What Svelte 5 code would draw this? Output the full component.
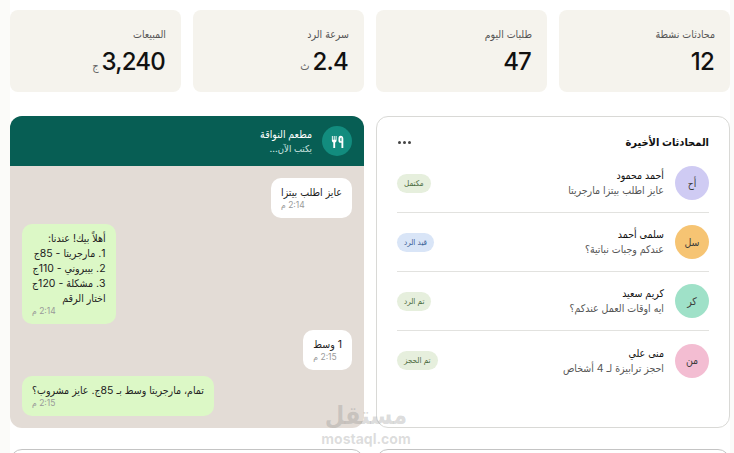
<script>
  const stats = [
    { label: 'محادثات نشطة', value: '12' },
    { label: 'طلبات اليوم', value: '47' },
    { label: 'سرعة الرد', value: '2.4', unit: 'ث' },
    { label: 'المبيعات', value: '3,240', unit: 'ج' }
  ];

  const chats = [
    { initials: 'أح', name: 'أحمد محمود', msg: 'عايز اطلب بيتزا مارجريتا', tag: 'مكتمل', color: '#cfcbf3', kind: 'green' },
    { initials: 'سل', name: 'سلمى أحمد', msg: 'عندكم وجبات نباتية؟', tag: 'قيد الرد', color: '#f6c473', kind: 'blue' },
    { initials: 'كر', name: 'كريم سعيد', msg: 'ايه اوقات العمل عندكم؟', tag: 'تم الرد', color: '#9fe1c8', kind: 'green' },
    { initials: 'من', name: 'منى علي', msg: 'احجز ترابيزة لـ 4 أشخاص', tag: 'تم الحجز', color: '#f3bdd2', kind: 'green' }
  ];

  const messages = [
    { from: 'in', lines: ['عايز اطلب بيتزا'], time: '2:14 م' },
    { from: 'out', lines: ['أهلاً بيك! عندنا:', '1. مارجريتا - 85ج', '2. بيبروني - 110ج', '3. مشكلة - 120ج', 'اختار الرقم'], time: '2:14 م' },
    { from: 'in', lines: ['1 وسط'], time: '2:15 م' },
    { from: 'out', lines: ['تمام، مارجريتا وسط بـ 85ج. عايز مشروب؟'], time: '2:15 م' }
  ];
</script>

<div class="page" dir="rtl">
  <div class="content">
    <section class="stats">
      {#each stats as s}
        <div class="stat">
          <div class="stat-label">{s.label}</div>
          <div class="stat-value">{#if s.unit}<span class="unit">{s.unit}</span>{/if}{s.value}</div>
        </div>
      {/each}
    </section>

    <section class="main">
      <div class="panel list">
        <div class="list-head">
          <h2>المحادثات الأخيرة</h2>
          <span class="dots"><i></i><i></i><i></i></span>
        </div>
        {#each chats as c}
          <div class="row">
            <div class="avatar" style="background: {c.color}">{c.initials}</div>
            <div class="row-text">
              <div class="name">{c.name}</div>
              <div class="msg">{c.msg}</div>
            </div>
            <span class="tag {c.kind}">{c.tag}</span>
          </div>
        {/each}
      </div>

      <div class="chat">
        <div class="chat-head">
          <div class="logo">
            <svg viewBox="0 0 16 16" width="15" height="15" fill="#fff">
              <path d="M2 2h1v4h1V2h1v4h1V2h1v5.2c0 .9-.7 1.6-1.500 1.800V15H3.500V9C2.700 8.800 2 8.100 2 7.200z" />
              <path d="M11.300 1.800c1.800 0 2.900 1.300 2.900 3.200V15h-2V9.300h-.9c-1.500 0-2.300-1-2.300-2.500V5c0-1.900.7-3.200 2.300-3.200zm.9 1.900c-.8.100-1.200.6-1.200 1.500v1.600c0 .5.300.8.700.8h.5z" />
            </svg>
          </div>
          <div>
            <div class="chat-title">مطعم النواقة</div>
            <div class="chat-sub">يكتب الآن...</div>
          </div>
        </div>
        <div class="chat-body">
          {#each messages as m}
            <div class="bubble {m.from}">
              {#each m.lines as line}<div>{line}</div>{/each}
              <div class="time">{m.time}</div>
            </div>
          {/each}
        </div>
      </div>
    </section>

    <section class="bottom">
      <div class="panel stub"></div>
      <div class="panel stub"></div>
    </section>
  </div>

  <div class="watermark">
    <div class="wm-ar">مستقل</div>
    <div class="wm-en">mostaql.com</div>
  </div>
</div>

<style>
  :global(body) {
    margin: 0;
    background: #fff;
    overflow: hidden;
  }

  .page {
    position: relative;
    box-sizing: border-box;
    width: 734px;
    height: 453px;
    padding: 0 4px 0 10px;
    overflow: hidden;
    background: #fbfbf9;
    color: #111;
    font-family: Inter, "DejaVu Sans Condensed", "DejaVu Sans", sans-serif;
  }

  .content {
    height: 100%;
    padding-top: 10px;
    box-sizing: border-box;
    background: #fff;
  }

  .stats {
    display: grid;
    grid-template-columns: repeat(4, 1fr);
    gap: 12px;
  }

  .stat {
    height: 82px;
    box-sizing: border-box;
    padding: 17px 15px 0;
    background: #f5f3ed;
    border-radius: 8px;
  }

  .stat-label {
    font-size: 10.500px;
    line-height: 15px;
    color: #555;
  }

  .stat-value {
    margin: 5px 1px 0 0;
    font-size: 24px;
    font-weight: 500;
    letter-spacing: -0.8px;
    line-height: 29px;
    direction: ltr;
    display: flex;
    justify-content: flex-end;
    align-items: baseline;
    gap: 3px;
  }

  .unit {
    font-size: 11px;
    font-weight: 400;
    letter-spacing: 0;
    color: #666;
  }

  .main {
    display: grid;
    grid-template-columns: 1fr 1fr;
    gap: 12px;
    margin-top: 24px;
    height: 312px;
  }

  .panel {
    box-sizing: border-box;
    background: #fff;
    border: 1px solid #d9d9d6;
    border-radius: 12px;
  }

  .list {
    padding: 14px 20px 0 20px;
  }

  .list-head {
    display: flex;
    justify-content: space-between;
    align-items: center;
    height: 22px;
    margin-bottom: 1px;
  }

  h2 {
    margin: 0;
    font-size: 11px;
    font-weight: 700;
    line-height: 22px;
  }

  .dots {
    display: flex;
    gap: 2px;
    margin-left: 1px;
  }

  .dots i {
    width: 3px;
    height: 3px;
    border-radius: 50%;
    background: #444;
  }

  .row {
    display: flex;
    align-items: center;
    gap: 11px;
    height: 59px;
    box-sizing: border-box;
    border-bottom: 1px solid #e2e2df;
  }

  .row:last-child {
    border-bottom: 0;
  }

  .avatar {
    flex: none;
    width: 34px;
    height: 34px;
    border-radius: 50%;
    display: flex;
    align-items: center;
    justify-content: center;
    font-size: 10.500px;
    color: #3c3c3c;
  }

  .row-text {
    flex: 1;
    min-width: 0;
  }

  .name {
    font-size: 10.500px;
    line-height: 16px;
    color: #111;
  }

  .msg {
    font-size: 10.500px;
    line-height: 14px;
    color: #555;
  }

  .tag {
    flex: none;
    height: 19px;
    padding: 0 7px;
    border-radius: 10px;
    font-size: 8px;
    line-height: 19px;
  }

  .tag.green {
    background: #e6efdd;
    color: #4a6b40;
  }

  .tag.blue {
    background: #d9e5f7;
    color: #3a5f96;
  }

  .chat {
    display: flex;
    flex-direction: column;
    border-radius: 12px;
    overflow: hidden;
    background: #e3dcd6;
  }

  .chat-head {
    flex: none;
    height: 50px;
    box-sizing: border-box;
    display: flex;
    align-items: center;
    gap: 10px;
    padding: 0 12px;
    background: #075e54;
    color: #fff;
  }

  .logo {
    width: 30px;
    height: 30px;
    border-radius: 50%;
    background: #128c7e;
    display: flex;
    align-items: center;
    justify-content: center;
  }

  .chat-title {
    font-size: 10.500px;
    line-height: 15px;
    font-weight: 500;
  }

  .chat-sub {
    font-size: 9.500px;
    line-height: 13px;
    color: #cfe6e1;
  }

  .chat-body {
    flex: 1;
    display: flex;
    flex-direction: column;
    align-items: flex-start;
    gap: 6px;
    padding: 12px;
  }

  .bubble {
    box-sizing: border-box;
    padding: 7px 10px;
    border-radius: 10px;
    font-size: 10.500px;
    line-height: 15px;
    color: #222;
  }

  .bubble.in {
    background: #fff;
    align-self: flex-start;
  }

  .bubble.out {
    background: #dcf8c6;
    align-self: flex-end;
  }

  .time {
    font-size: 8.500px;
    line-height: 11px;
    color: #999;
    text-align: left;
  }

  .bottom {
    display: grid;
    grid-template-columns: 1fr 1fr;
    gap: 12px;
    margin-top: 21px;
  }

  .stub {
    height: 60px;
    border-color: #c4c4c4;
  }

  .watermark {
    position: absolute;
    left: 320px;
    top: 401px;
    width: 92px;
    direction: ltr;
    text-align: center;
    color: rgba(120, 120, 120, 0.26);
    font-weight: 700;
    pointer-events: none;
  }

  .wm-ar {
    font-size: 25px;
    line-height: 29px;
  }

  .wm-en {
    margin-top: 2px;
    font-size: 14px;
    line-height: 14px;
  }
</style>
